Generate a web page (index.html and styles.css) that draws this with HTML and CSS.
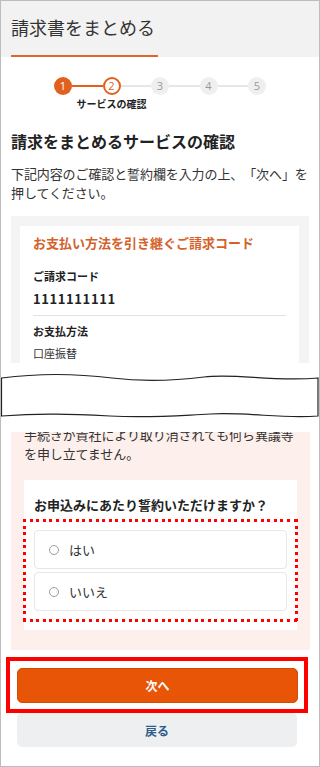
FILE: index.html
```html
<!DOCTYPE html>
<html lang="ja">

<head>
	<meta charset="UTF-8">
	<meta name="viewport" content="width=device-width, initial-scale=1.0">
	<title>請求書をまとめる</title>
	<link rel="stylesheet" href="styles.css">
</head>

<body>
	<div class="page">

		<div class="upper">
			<!-- Page header -->
			<header class="page-header">
				<h1 class="page-title">請求書をまとめる</h1>
			</header>

			<!-- Stepper -->
			<ol class="stepper">
				<li class="step is-done"><span class="step-num">1</span></li>
				<li class="step-line is-done"></li>
				<li class="step is-current">
					<span class="step-num">2</span>
					<span class="step-label">サービスの確認</span>
				</li>
				<li class="step-line"></li>
				<li class="step"><span class="step-num">3</span></li>
				<li class="step-line"></li>
				<li class="step"><span class="step-num">4</span></li>
				<li class="step-line"></li>
				<li class="step"><span class="step-num">5</span></li>
			</ol>

			<main class="content">
				<h2 class="section-title">請求をまとめるサービスの確認</h2>
				<p class="lead">下記内容のご確認と誓約欄を入力の上、「次へ」を押してください。</p>

				<div class="info-panel">
					<div class="info-card">
						<h3 class="info-heading">お支払い方法を引き継ぐご請求コード</h3>
						<dl class="info-list">
							<dt>ご請求コード</dt>
							<dd class="code">1111111111</dd>
							<dt class="with-rule">お支払方法</dt>
							<dd>口座振替</dd>
						</dl>
					</div>
				</div>
			</main>
		</div>

		<!-- torn edge: content omitted -->
		<svg class="tear" width="320" height="48" viewBox="0 0 320 48" aria-hidden="true">
			<path d="M1.5 6 C 40 1, 80 2, 112 6 S 172 9, 204 5 S 272 10, 318 6 L 318 44 C 282 47, 250 40, 210 42 S 150 46, 110 44 S 40 41, 1.5 44 Z"
				fill="#fff" stroke="#222" stroke-width="1.2" />
		</svg>

		<section class="pledge-panel">
			<p class="pledge-text">手続きが貴社により取り消されても何ら異議等<br>を申し立てません。</p>

			<div class="pledge-card">
				<p class="pledge-question">お申込みにあたり誓約いただけますか？</p>
				<div class="pledge-options">
					<label class="option"><span class="radio"></span>はい</label>
					<label class="option"><span class="radio"></span>いいえ</label>
				</div>
			</div>
		</section>

		<div class="actions">
			<div class="next-frame">
				<button class="btn btn-next" type="button">次へ</button>
			</div>
			<button class="btn btn-back" type="button">戻る</button>
		</div>

	</div>
</body>

</html>
```

FILE: styles.css
```css
* {
	box-sizing: border-box;
}

body {
	margin: 0;
	font-family: "Noto Sans CJK JP", "Noto Sans", sans-serif;
	color: #333;
	background-color: #fff;
	text-spacing-trim: space-all;
}

.page {
	width: 320px;
	height: 767px;
	border: 1px solid #bdbdbd;
	overflow: hidden;
	background-color: #fff;
}

.upper {
	height: 362px;
	overflow: hidden;
}

/* header */
.page-header {
	background-color: #f2f2f2;
	padding: 0 10px;
}

.page-title {
	display: inline-block;
	margin: 0;
	padding: 14px 3px 16px 0;
	font-size: 18px;
	font-weight: normal;
	line-height: 24px;
	color: #333;
	border-bottom: 2px solid #e0662a;
}

/* stepper */
.stepper {
	list-style: none;
	margin: 20px 0 0;
	padding: 0;
	display: flex;
	justify-content: center;
	align-items: flex-start;
	height: 34px;
}

.step {
	width: 18px;
	display: flex;
	flex-direction: column;
	align-items: center;
}

.step-num {
	width: 18px;
	height: 18px;
	border-radius: 50%;
	background-color: #efefef;
	color: #999;
	font-family: "Open Sans", "Noto Sans", sans-serif;
	font-size: 11px;
	line-height: 18px;
	text-align: center;
}

.step.is-done .step-num {
	background-color: #e2601e;
	color: #fff;
}

.step.is-current .step-num {
	background-color: #fff;
	border: 2px solid #e2601e;
	color: #e2601e;
	line-height: 14px;
}

.step-label {
	margin-top: 2px;
	white-space: nowrap;
	font-size: 10px;
	font-weight: bold;
	line-height: 14px;
	color: #222;
}

.step-line {
	width: 30.5px;
	height: 2px;
	margin-top: 8px;
	background-color: #e6e6e6;
}

.step-line.is-done {
	background-color: #e2601e;
}

/* main */
.content {
	padding: 0 10px;
}

.section-title {
	margin: 19px 0 0;
	font-size: 16px;
	line-height: 22px;
	color: #222;
}

.lead {
	margin: 12px 0 0;
	font-size: 13px;
	line-height: 19px;
	letter-spacing: -0.1px;
	color: #333;
}

.info-panel {
	margin-top: 14px;
	padding: 10px 10px 10px 9px;
	background-color: #f4f4f4;
}

.info-card {
	background-color: #fff;
	padding: 8px 13px 10px;
}

.info-heading {
	margin: 0;
	font-size: 13px;
	line-height: 18px;
	color: #d3622a;
}

.info-list {
	margin: 16px 0 0;
}

.info-list dt {
	font-size: 11px;
	font-weight: bold;
	line-height: 16px;
	color: #222;
}

.info-list dd {
	margin: 6px 0 0;
	font-size: 11px;
	line-height: 16px;
	color: #333;
}

.info-list dd.code {
	font-size: 13px;
	font-weight: bold;
	line-height: 18px;
	letter-spacing: 0.6px;
	color: #222;
	padding-bottom: 7px;
	border-bottom: 1px solid #e2e2e2;
}

.info-list dt.with-rule {
	margin-top: 7px;
}

/* torn edge */
.tear {
	display: block;
	margin: 9px 0 0 -1px;
}

/* pledge */
.pledge-panel {
	margin: 12px 9px 0 10px;
	padding: 0 13px 20px;
	background-color: #fdf0ec;
	overflow: hidden;
}

.pledge-text {
	margin: -7px 0 0;
	font-size: 13px;
	line-height: 19px;
	letter-spacing: -0.1px;
	color: #333;
}

.pledge-card {
	margin-top: 17px;
	padding: 16px 0 8px;
	background-color: #fff;
}

.pledge-question {
	margin: 0;
	padding: 0 10px;
	font-size: 13px;
	font-weight: bold;
	line-height: 18px;
	color: #222;
}

/* red dotted marker round the answers */
.pledge-options {
	margin: 5px -1px 0;
	padding: 11px;
	display: flex;
	flex-direction: column;
	gap: 3px;
	background:
		repeating-linear-gradient(90deg, #f00 0 3px, transparent 3px 6.6px) left top / 100% 3px no-repeat,
		repeating-linear-gradient(90deg, #f00 0 3px, transparent 3px 6.6px) left bottom / 100% 3px no-repeat,
		repeating-linear-gradient(180deg, #f00 0 3px, transparent 3px 6.6px) left top / 3px 100% no-repeat,
		repeating-linear-gradient(180deg, #f00 0 3px, transparent 3px 6.6px) right top / 3px 100% no-repeat;
}

.option {
	display: flex;
	align-items: center;
	height: 39px;
	padding-left: 14px;
	border: 1.5px solid #e6e6e6;
	border-radius: 4px;
	background-color: #fff;
	font-size: 13px;
	color: #333;
}

.radio {
	width: 10px;
	height: 10px;
	margin-right: 10px;
	border: 1.5px solid #9c9c9c;
	border-radius: 50%;
}

/* buttons */
.next-frame {
	margin: 7px 11px 0 5px;
	padding: 7px 6px 6px 7px;
	border: 4px solid #f00;
}

.btn {
	display: block;
	width: 100%;
	border: none;
	border-radius: 5px;
	font-family: inherit;
	font-size: 12px;
	font-weight: bold;
	cursor: pointer;
}

.btn-next {
	height: 35px;
	background-color: #e85506;
	border: 1px solid #d24c05;
	color: #fff;
}

.btn-back {
	width: 280px;
	margin: 0 0 0 16px;
	height: 34px;
	background-color: #edeff1;
	color: #2e5c88;
}
```
